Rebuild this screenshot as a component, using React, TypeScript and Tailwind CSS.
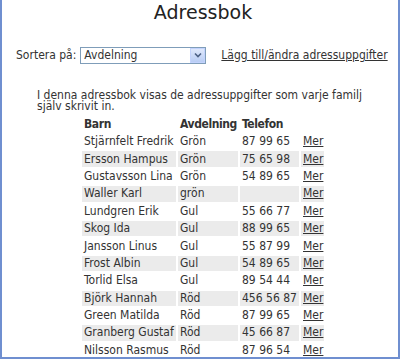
import React from 'react';

// Adressbok – lista med barn, avdelning och telefon
const rows: [string, string, string][] = [
  ['Stjärnfelt Fredrik', 'Grön', '87 99 65'],
  ['Ersson Hampus', 'Grön', '75 65 98'],
  ['Gustavsson Lina', 'Grön', '54 89 65'],
  ['Waller Karl', 'grön', ''],
  ['Lundgren Erik', 'Gul', '55 66 77'],
  ['Skog Ida', 'Gul', '88 99 65'],
  ['Jansson Linus', 'Gul', '55 87 99'],
  ['Frost Albin', 'Gul', '54 89 65'],
  ['Torlid Elsa', 'Gul', '89 54 44'],
  ['Björk Hannah', 'Röd', '456 56 87'],
  ['Green Matilda', 'Röd', '87 99 65'],
  ['Granberg Gustaf', 'Röd', '45 66 87'],
  ['Nilsson Rasmus', 'Röd', '87 96 54'],
];

export default function App() {
  return (
    <div
      className="w-[400px] h-[359px] overflow-hidden bg-white border-l-2 border-r-2 border-b-2 border-[#6f8fd0] text-[#333] text-[12px]"
      style={{ fontFamily: '"DejaVu Sans Condensed", "DejaVu Sans", sans-serif' }}
    >
      {/* rubrik */}
      <h1
        className="text-center text-[19px] leading-[24px] pl-[6px] text-[#222]"
        style={{ fontFamily: '"DejaVu Sans", sans-serif' }}
      >
        Adressbok
      </h1>

      {/* sortering + länk */}
      <div className="flex items-center mt-[22px] pl-[14px]">
        <span className="mr-[4px]">Sortera på:</span>
        <div className="flex items-center w-[126px] h-[17px] border border-[#7f9db9] bg-white">
          <span className="flex-1 pl-[3px] leading-[15px]">Avdelning</span>
          <span className="w-[15px] h-[15px] flex items-center justify-center bg-gradient-to-b from-[#dfe8fb] to-[#b9cdf5] border border-[#c3d3fd]">
            <svg width="8" height="6" viewBox="0 0 8 6">
              <path d="M1 1.5 L4 4.5 L7 1.5" fill="none" stroke="#4d6185" strokeWidth="1.6" />
            </svg>
          </span>
        </div>
        <a href="#" className="ml-[15px] underline text-[#333]">Lägg till/ändra adressuppgifter</a>
      </div>

      {/* beskrivning */}
      <p className="mt-[26px] pl-[35px] pr-[30px] leading-[11px]">
        I denna adressbok visas de adressuppgifter som varje familj själv skrivit in.
      </p>

      {/* tabell */}
      <table className="ml-[78px] mt-[3px] table-fixed w-[244px] border-separate border-spacing-[2px]">
        <colgroup>
          <col className="w-[94px]" />
          <col className="w-[60px]" />
          <col className="w-[59px]" />
          <col className="w-[23px]" />
        </colgroup>
        <thead>
          <tr>
            <th className="h-[15px] text-left font-bold px-[2px] leading-[15px] tracking-[-0.4px] whitespace-nowrap">Barn</th>
            <th className="h-[15px] text-left font-bold px-[2px] leading-[15px] tracking-[-0.4px] whitespace-nowrap">Avdelning</th>
            <th className="h-[15px] text-left font-bold px-[2px] leading-[15px] tracking-[-0.4px] whitespace-nowrap">Telefon</th>
            <th></th>
          </tr>
        </thead>
        <tbody>
          {rows.map((r, i) => {
            const bg = i % 2 === 1 ? 'bg-[#ebebeb]' : '';
            return (
              <tr key={r[0]}>
                <td className={`${bg} h-[15.4px] px-[2px] py-0 leading-[15px] whitespace-nowrap overflow-hidden`}>{r[0]}</td>
                <td className={`${bg} h-[15.4px] px-[2px] py-0 leading-[15px]`}>{r[1]}</td>
                <td className={`${bg} h-[15.4px] px-[2px] py-0 leading-[15px] whitespace-nowrap`}>{r[2]}</td>
                <td className={`${bg} h-[15.4px] px-[2px] py-0 leading-[15px]`}>
                  <a href="#" className="underline text-[#333]">Mer</a>
                </td>
              </tr>
            );
          })}
        </tbody>
      </table>
    </div>
  );
}
